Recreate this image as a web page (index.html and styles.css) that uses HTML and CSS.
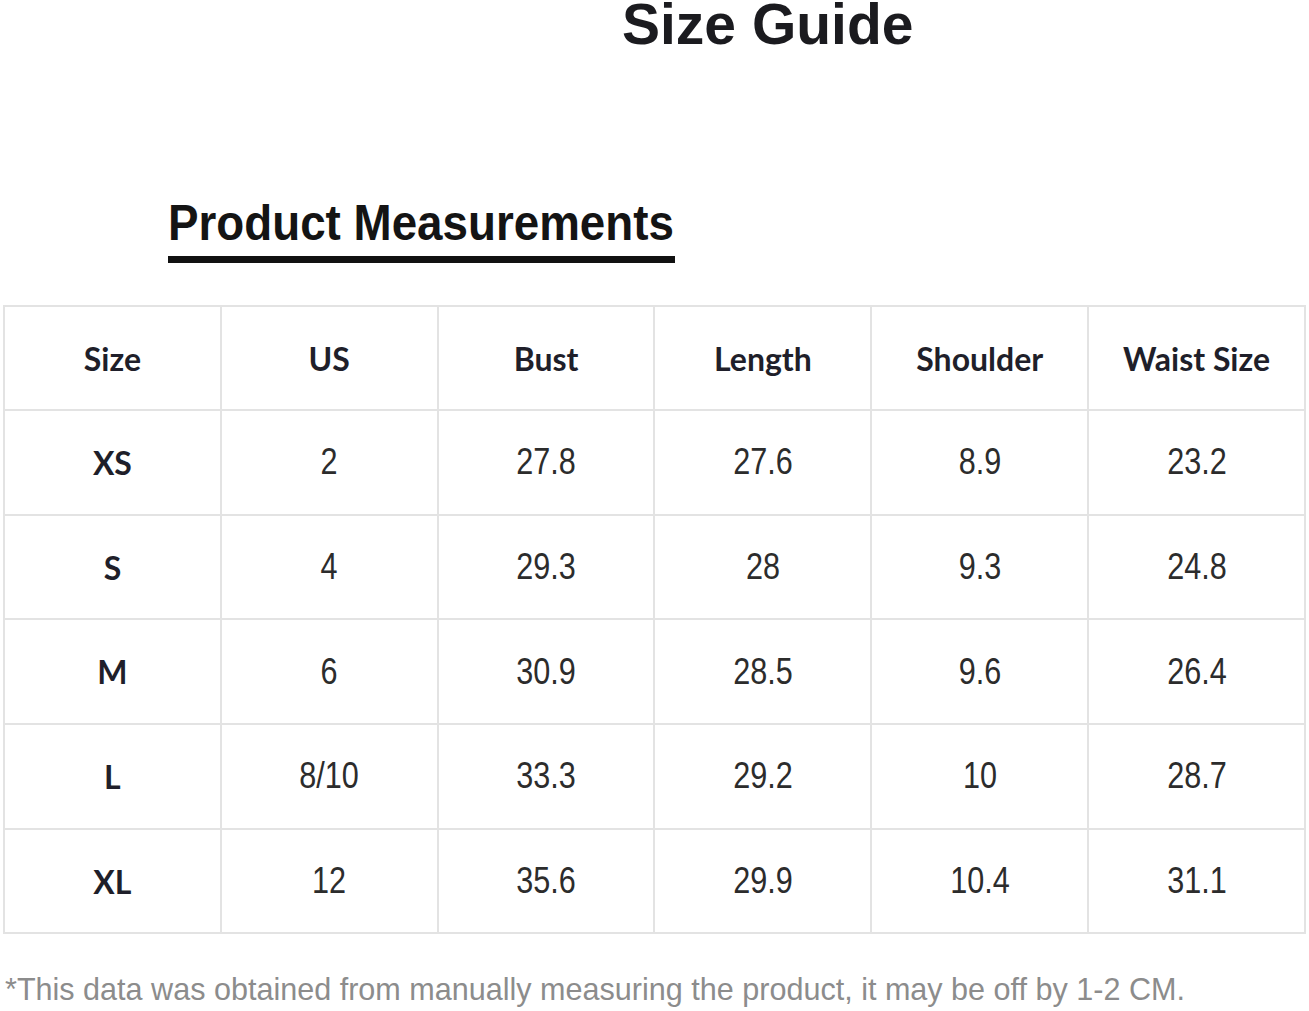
FILE: index.html
```html
<!DOCTYPE html>
<html>
<head>
<meta charset="utf-8">
<link rel="stylesheet" href="styles.css">
</head>
<body>
<div class="page">
  <h1 class="title">Size Guide</h1>
  <div class="subhead">
    <h2 class="subtitle"><span class="sq">Product Measurements</span></h2>
  </div>
  <table class="chart">
    <thead>
      <tr>
        <th>Size</th><th>US</th><th>Bust</th><th>Length</th><th>Shoulder</th><th>Waist Size</th>
      </tr>
    </thead>
    <tbody>
      <tr><td class="sz">XS</td><td><span class="n">2</span></td><td><span class="n">27.8</span></td><td><span class="n">27.6</span></td><td><span class="n">8.9</span></td><td><span class="n">23.2</span></td></tr>
      <tr><td class="sz">S</td><td><span class="n">4</span></td><td><span class="n">29.3</span></td><td><span class="n">28</span></td><td><span class="n">9.3</span></td><td><span class="n">24.8</span></td></tr>
      <tr><td class="sz">M</td><td><span class="n">6</span></td><td><span class="n">30.9</span></td><td><span class="n">28.5</span></td><td><span class="n">9.6</span></td><td><span class="n">26.4</span></td></tr>
      <tr><td class="sz">L</td><td><span class="n">8/10</span></td><td><span class="n">33.3</span></td><td><span class="n">29.2</span></td><td><span class="n">10</span></td><td><span class="n">28.7</span></td></tr>
      <tr><td class="sz">XL</td><td><span class="n">12</span></td><td><span class="n">35.6</span></td><td><span class="n">29.9</span></td><td><span class="n">10.4</span></td><td><span class="n">31.1</span></td></tr>
    </tbody>
  </table>
  <p class="note"><span class="nq">*This data was obtained from manually measuring the product, it may be off by 1-2 CM.</span></p>
</div>
</body>
</html>
```

FILE: styles.css
```css
html, body {
  margin: 0;
  padding: 0;
  background: #ffffff;
}

.page {
  width: 1309px;
  height: 1011px;
  overflow: hidden;
  font-family: "Liberation Sans", Arial, sans-serif;
}

.title {
  margin: 0 0 0 622px;
  font-size: 57px;
  line-height: 48px;
  font-weight: 700;
  color: #1b1b1f;
  white-space: nowrap;
}

.subhead {
  margin: 150px 0 0 168px;
  height: 107px;
}

.subtitle {
  display: inline-block;
  margin: 0;
  font-size: 50px;
  line-height: 50px;
  font-weight: 700;
  color: #141414;
  width: 507px;
  padding-bottom: 8px;
  border-bottom: 7px solid #111111;
  white-space: nowrap;
}

.sq {
  display: inline-block;
  transform: scaleX(0.915);
  transform-origin: left center;
}

.chart {
  margin-left: 3px;
  width: 1303px;
  border-collapse: collapse;
  table-layout: fixed;
}

.chart th,
.chart td {
  border: 2px solid #e3e3e3;
  text-align: center;
  vertical-align: middle;
  padding: 0;
}

.chart th {
  height: 102px;
  font-family: Lato, "Liberation Sans", sans-serif;
  font-size: 32px;
  font-weight: 700;
  color: #1f1f2a;
}

.chart td {
  height: 102.7px;
  font-size: 36px;
  color: #2c2c2c;
}

.chart td.sz {
  font-family: Lato, "Liberation Sans", sans-serif;
  font-size: 32px;
  font-weight: 700;
  color: #1f1f2a;
}

.n {
  display: inline-block;
  transform: scaleX(0.85);
  transform-origin: center center;
}

.note {
  margin: 35px 0 0 5px;
  font-size: 32px;
  line-height: 40px;
  color: #8c8c8c;
  white-space: nowrap;
}

.nq {
  display: inline-block;
  transform: scaleX(0.955);
  transform-origin: left center;
}
```
